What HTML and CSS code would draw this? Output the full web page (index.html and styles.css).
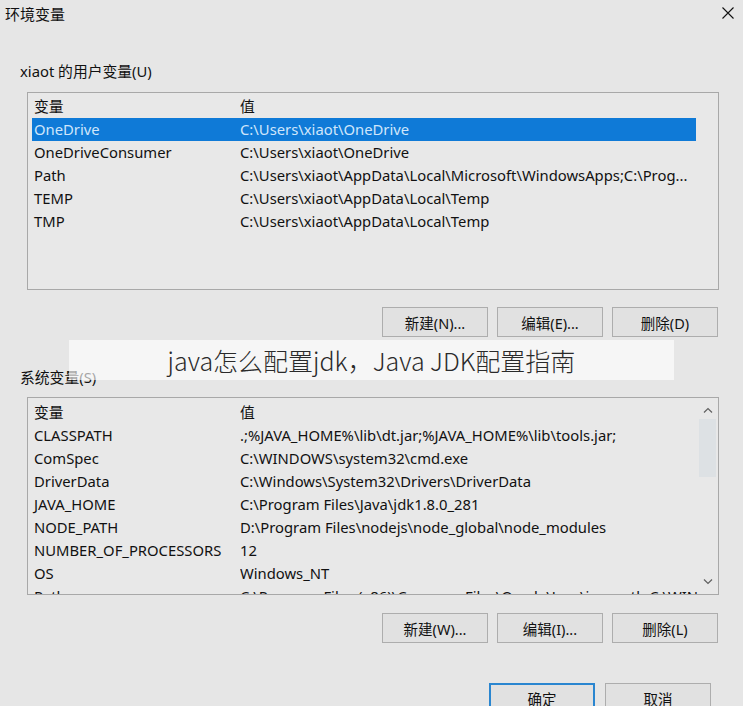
FILE: index.html
```html
<!DOCTYPE html>
<html lang="zh-CN">
<head>
<meta charset="utf-8">
<title>环境变量</title>
<link rel="stylesheet" href="styles.css">
</head>
<body>
<div class="dialog">
  <div class="titlebar">
    <span class="title">环境变量</span>
    <svg class="close" width="12" height="12" viewBox="0 0 12 12"><path d="M0.5 0.5 L11.5 11.5 M11.5 0.5 L0.5 11.5" stroke="#111" stroke-width="1.1" fill="none"/></svg>
  </div>

  <div class="group-label user-label">xiaot 的用户变量(U)</div>
  <div class="listbox user-list">
    <div class="row head"><span class="c1">变量</span><span class="c2">值</span></div>
    <div class="row selected"><span class="c1">OneDrive</span><span class="c2">C:\Users\xiaot\OneDrive</span></div>
    <div class="row"><span class="c1">OneDriveConsumer</span><span class="c2">C:\Users\xiaot\OneDrive</span></div>
    <div class="row"><span class="c1">Path</span><span class="c2">C:\Users\xiaot\AppData\Local\Microsoft\WindowsApps;C:\Prog...</span></div>
    <div class="row"><span class="c1">TEMP</span><span class="c2">C:\Users\xiaot\AppData\Local\Temp</span></div>
    <div class="row"><span class="c1">TMP</span><span class="c2">C:\Users\xiaot\AppData\Local\Temp</span></div>
  </div>
  <div class="buttons btns-user">
    <button class="btn">新建(N)...</button>
    <button class="btn">编辑(E)...</button>
    <button class="btn">删除(D)</button>
  </div>

  <div class="group-label sys-label">系统变量(S)</div>
  <div class="listbox sys-list">
    <div class="rows">
      <div class="row head"><span class="c1">变量</span><span class="c2">值</span></div>
      <div class="row"><span class="c1">CLASSPATH</span><span class="c2">.;%JAVA_HOME%\lib\dt.jar;%JAVA_HOME%\lib\tools.jar;</span></div>
      <div class="row"><span class="c1">ComSpec</span><span class="c2">C:\WINDOWS\system32\cmd.exe</span></div>
      <div class="row"><span class="c1">DriverData</span><span class="c2">C:\Windows\System32\Drivers\DriverData</span></div>
      <div class="row"><span class="c1">JAVA_HOME</span><span class="c2">C:\Program Files\Java\jdk1.8.0_281</span></div>
      <div class="row"><span class="c1">NODE_PATH</span><span class="c2">D:\Program Files\nodejs\node_global\node_modules</span></div>
      <div class="row"><span class="c1">NUMBER_OF_PROCESSORS</span><span class="c2">12</span></div>
      <div class="row"><span class="c1">OS</span><span class="c2">Windows_NT</span></div>
      <div class="row"><span class="c1">Path</span><span class="c2">C:\Program Files (x86)\Common Files\Oracle\Java\javapath;C:\WINDOWS</span></div>
    </div>
    <div class="scrollbar">
      <svg class="arrow" width="10" height="6" viewBox="0 0 10 6"><path d="M1 5.5 L5 1.5 L9 5.5" stroke="#606060" stroke-width="1.2" fill="none"/></svg>
      <div class="thumb"></div>
      <div class="track"></div>
      <svg class="arrow" width="10" height="6" viewBox="0 0 10 6"><path d="M1 0.5 L5 4.5 L9 0.5" stroke="#606060" stroke-width="1.2" fill="none"/></svg>
    </div>
  </div>
  <div class="buttons btns-sys">
    <button class="btn">新建(W)...</button>
    <button class="btn">编辑(I)...</button>
    <button class="btn">删除(L)</button>
  </div>

  <div class="buttons footer">
    <button class="btn primary">确定</button>
    <button class="btn">取消</button>
  </div>

  <div class="banner">java怎么配置jdk，Java JDK配置指南</div>
</div>
</body>
</html>
```

FILE: styles.css
```css
* { box-sizing: border-box; }
html, body { margin: 0; padding: 0; }
body {
  background: #e6e6e6;
  font-family: "Noto Sans", "Noto Sans CJK SC", sans-serif;
  font-size: 14.8px;
  color: #111;
  width: 743px;
  height: 706px;
  overflow: hidden;
}
.dialog {
  position: relative;
  display: flex;
  flex-direction: column;
  height: 706px;
}
.dialog > * { flex: none; }
.titlebar {
  height: 28px;
  display: flex;
  align-items: center;
  justify-content: space-between;
  padding: 0 9px 0 5px;
}
.title { font-size: 15px; line-height: 28px; }
.close { margin-top: -2px; }

.group-label {
  margin-left: 20px;
  height: 20px;
  line-height: 20px;
}
.user-label { margin-top: 33px; }
.sys-label { margin-top: 30px; }

.listbox {
  margin-left: 27px;
  width: 692px;
  height: 198px;
  border: 1px solid #a8a8a8;
  background: #e8e8e8;
  padding: 2px 22px 0 4px;
  overflow: hidden;
}
.user-list { margin-top: 11px; }
.sys-list {
  margin-top: 10px;
  display: flex;
  padding: 2px 1px 0 4px;
}
.rows { flex: 1; overflow: hidden; padding-top: 1px; }
.row {
  display: flex;
  height: 23px;
  line-height: 23px;
  white-space: nowrap;
}
.row .c1 { width: 208px; padding-left: 2px; flex: none; }
.row .c2 { flex: 1; overflow: hidden; }
.row.selected { background: #0f7ad7; color: #cfe6fb; }
.row.head { color: #111; }

.scrollbar {
  width: 19px;
  flex: none;
  display: flex;
  flex-direction: column;
  align-items: center;
  margin-top: -2px;
  padding-top: 9px;
  padding-bottom: 9px;
}
.scrollbar .arrow { flex: none; }
.thumb {
  width: 17px;
  height: 58px;
  margin-top: 6px;
  background: #dde1e4;
}
.track { flex: 1; }

.buttons {
  display: flex;
  justify-content: flex-end;
  gap: 9px;
  padding-right: 25px;
}
.btns-user { margin-top: 17px; }
.btns-sys { margin-top: 18px; }
.footer { margin-top: 40px; padding-right: 32px; gap: 10px; }
.btn {
  width: 106px;
  height: 30px;
  border: 1px solid #adadad;
  background: #e1e1e1;
  font-family: "Noto Sans", "Noto Sans CJK SC", sans-serif;
  font-size: 14.5px;
  color: #111;
  padding: 0;
}
.btn.primary { border: 2px solid #2a86d0; }

.banner {
  position: absolute;
  left: 69px;
  top: 340px;
  width: 605px;
  height: 40px;
  background: rgba(255, 255, 255, 0.62);
  text-align: center;
  line-height: 40px;
  font-family: "Noto Sans CJK SC", sans-serif;
  font-weight: 300;
  font-size: 25px;
  color: #2a2a2a;
}
```
